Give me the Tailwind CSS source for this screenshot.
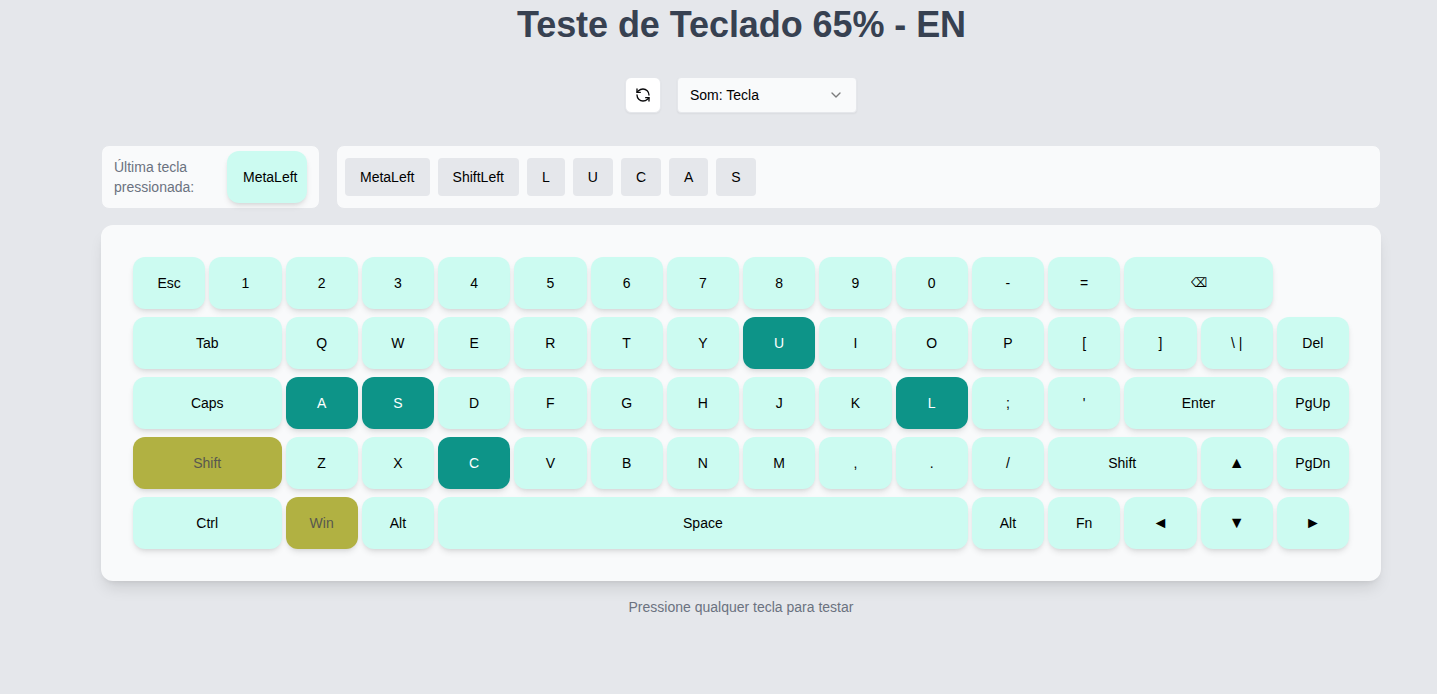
<!DOCTYPE html>
<html lang="pt-BR">
<head>
<meta charset="utf-8">
<title>Teste de Teclado 65% - EN</title>
<script src="https://cdn.jsdelivr.net/npm/@tailwindcss/browser@4"></script>
</head>
<body class="h-screen overflow-hidden bg-[#e5e7eb] pl-[45px] font-['Liberation_Sans',Arial,sans-serif] text-sm text-black">
<main class="mx-auto flex w-[1280px] flex-col items-center pt-[5px]">
  <h1 class="pl-px text-4xl leading-10 font-bold tracking-[-0.07px] text-[#374151]">Teste de Teclado 65% - EN</h1>

  <div class="mt-8 flex gap-4">
    <button class="flex size-9 items-center justify-center rounded-md border border-[#e5e7eb] bg-white shadow-[0_1px_2px_0_rgb(0_0_0/0.05)]" aria-label="Reiniciar">
      <svg class="size-4" viewBox="0 0 24 24" fill="none" stroke="#09090b" stroke-width="2" stroke-linecap="round" stroke-linejoin="round"><path d="M21 12a9 9 0 0 0-9-9 9.75 9.75 0 0 0-6.74 2.74L3 8"/><path d="M3 3v5h5"/><path d="M3 12a9 9 0 0 0 9 9 9.75 9.75 0 0 0 6.74-2.74L21 16"/><path d="M16 16h5v5"/></svg>
    </button>
    <button class="flex h-9 w-[180px] items-center justify-between rounded-sm border border-[#e5e7eb] bg-[#f9fafb] px-3 shadow-[0_1px_2px_0_rgb(0_0_0/0.05)]">
      <span>Som: Tecla</span>
      <svg class="size-4 opacity-50" viewBox="0 0 24 24" fill="none" stroke="#000" stroke-width="2" stroke-linecap="round" stroke-linejoin="round"><path d="m6 9 6 6 6-6"/></svg>
    </button>
  </div>

  <div class="mt-8 flex h-16 w-full gap-4">
    <div class="flex w-[219px] items-center justify-between rounded-lg border border-[#e5e7eb] bg-[#f9fafb] px-3">
      <p class="w-24 leading-5 text-[#6b7280]">Última tecla pressionada:</p>
      <div class="flex h-13 w-20 items-center rounded-xl bg-[#ccfbf1] pl-4 shadow-[0_4px_6px_-1px_rgb(0_0_0/0.1),0_2px_4px_-2px_rgb(0_0_0/0.1)]">MetaLeft</div>
    </div>
    <div id="history" class="flex flex-1 items-center gap-2 rounded-lg border border-[#e5e7eb] bg-[#f9fafb] px-2"></div>
  </div>

  <section id="keyboard" class="mt-4 grid w-full grid-cols-16 gap-x-1 gap-y-2 rounded-xl bg-[#f9fafb] p-8 shadow-[0_10px_15px_-3px_rgb(0_0_0/0.1),0_4px_6px_-4px_rgb(0_0_0/0.1)]"></section>

  <p class="mt-4 leading-5 text-[#6b7280]">Pressione qualquer tecla para testar</p>
</main>
<script>
const history_ = document.getElementById('history');
for (const k of ['MetaLeft', 'ShiftLeft', 'L', 'U', 'C', 'A', 'S']) {
  const chip = document.createElement('span');
  chip.className = 'flex h-[38px] items-center rounded-sm bg-[#e5e7eb] px-[15px]' + (k === 'MetaLeft' ? ' w-[84.6px]' : '');
  chip.textContent = k;
  history_.append(chip);
}

// Each key: [label, column span, state]
const rows = [
  [['Esc'], '1234567890-=', ['⌫', 2], ['', 1, 'blank']],
  [['Tab', 2], 'QWERTY', ['U', 1, 'tested'], 'IOP[]', ['\\ |'], ['Del']],
  [['Caps', 2], ['A', 1, 'tested'], ['S', 1, 'tested'], 'DFGHJK', ['L', 1, 'tested'], ";'", ['Enter', 2], ['PgUp']],
  [['Shift', 2, 'held'], 'ZX', ['C', 1, 'tested'], 'VBNM,./', ['Shift', 2], '▲', ['PgDn']],
  [['Ctrl', 2], ['Win', 1, 'held'], ['Alt'], ['Space', 7], ['Alt'], ['Fn'], '◄▼►'],
];
const spans = {1: 'col-span-1', 2: 'col-span-2', 7: 'col-span-7'};
const glyphs = {'⌫': 'text-[13px] scale-x-[0.88]', '▲': 'text-base', '▼': 'text-base', '◄': 'text-base', '►': 'text-base'};
const states = {
  idle: 'bg-[#ccfbf1] text-black shadow-[0_4px_6px_-1px_rgb(0_0_0/0.1),0_2px_4px_-2px_rgb(0_0_0/0.1)]',
  tested: 'bg-[#0d9488] text-white shadow-[0_4px_6px_-1px_rgb(0_0_0/0.1),0_2px_4px_-2px_rgb(0_0_0/0.1)]',
  held: 'bg-[#b1b142] text-[#58584f] shadow-[0_4px_6px_-1px_rgb(0_0_0/0.1),0_2px_4px_-2px_rgb(0_0_0/0.1)]',
  blank: 'invisible',
};
const board = document.getElementById('keyboard');
for (const row of rows) {
  for (const item of row) {
    const keys = typeof item === 'string' ? [...item].map(c => [c]) : [item];
    for (const [label, span = 1, state = 'idle'] of keys) {
      const el = document.createElement('div');
      el.className = 'flex h-13 items-center justify-center rounded-xl ' + spans[span] + ' ' + states[state];
      const text = document.createElement('span');
      text.className = glyphs[label] || '';
      text.textContent = label;
      el.append(text);
      board.append(el);
    }
  }
}
</script>
</body>
</html>
